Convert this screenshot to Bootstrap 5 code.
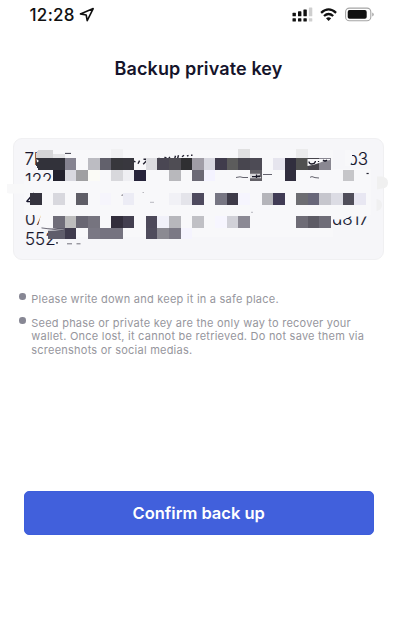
<!DOCTYPE html>
<html lang="en">
<head>
<meta charset="utf-8">
<meta name="viewport" content="width=device-width, initial-scale=1">
<title>Backup private key</title>
<link href="https://cdn.jsdelivr.net/npm/bootstrap@5.3.0/dist/css/bootstrap.min.css" rel="stylesheet">
<style>
body{font-family:Inter,"Liberation Sans",sans-serif;background:#fff;color:#15142b;height:643px;overflow:hidden}
.status{height:30px;padding:0 26px 0 29.5px;color:#111}
.clock{font-size:17px;font-weight:500;line-height:30px;letter-spacing:.3px}
.loc-arrow{margin-left:3px}
.screen-title{font-size:18px;font-weight:600;line-height:24px;margin:26.5px 0 0 -3px;letter-spacing:.12px}
.key-card{margin:57.5px 16px 0 13px;height:122px;border-radius:9px;background:#f6f6f9;border:1px solid #f0f0f2}
.key-card svg{left:-14px;top:-9px}
.notes{margin:32.5px 20px 0 19px;font-size:11px;line-height:13.6px;color:#96969d;letter-spacing:.23px}
.notes li{padding-left:12.3px;position:relative}
.notes li+li{margin-top:10.6px}
.notes li::before{content:"";position:absolute;left:0;top:.5px;width:6.5px;height:6.5px;border-radius:50%;background:#878794}
.confirm{--bs-btn-bg:#4160dc;--bs-btn-border-color:#3d5edb;--bs-btn-hover-bg:#3856cd;--bs-btn-color:#fff;margin:133.8px 26px 0 23.5px;height:43.5px;border-radius:5px;font-size:16.5px;font-weight:600;line-height:1}
</style>
<script src="https://cdn.jsdelivr.net/npm/bootstrap@5.3.0/dist/js/bootstrap.bundle.min.js"></script>
</head>
<body>
<header class="status d-flex align-items-center justify-content-between">
  <div class="d-flex align-items-center">
    <span class="clock">12:28</span>
    <svg class="loc-arrow" width="17" height="16" viewBox="0 0 17 16"><path d="M15.2 1.6 2.4 6.9 8.2 8 9.2 13.6Z" fill="none" stroke="#111" stroke-width="1.6" stroke-linejoin="round"/></svg>
  </div>
  <svg width="84" height="16" viewBox="290 6.5 84 16">
    <g fill="#111"><rect x="292.5" y="12.3" width="3.4" height="3.5" rx=".6"/><rect x="298" y="10.8" width="3.4" height="5" rx=".6"/><rect x="303.4" y="9" width="3.4" height="6.8" rx=".6"/><rect x="292.5" y="17.7" width="3.4" height="3.3" rx=".6"/><rect x="298" y="17.7" width="3.4" height="3.3" rx=".6"/><rect x="303.4" y="17.7" width="3.4" height="3.3" rx=".6"/></g>
    <g fill="#cfcfcf"><rect x="308.9" y="7" width="3.4" height="8.8" rx=".6"/><rect x="308.9" y="17.7" width="3.4" height="3.3" rx=".6"/></g>
    <g fill="none" stroke="#111" stroke-width="2.3"><path d="M321.1 12.3q7.5-6.8 15 0"/><path d="M324 15.5q4.6-4 9.2 0"/></g>
    <path d="M328.6 20.4 326 17.8q2.6-1.9 5.2 0Z" fill="#111"/>
    <rect x="345.6" y="7.6" width="25.2" height="12.7" rx="3.8" fill="none" stroke="#a5a5a5" stroke-width="1.1"/>
    <rect x="347.7" y="9.6" width="19" height="8.7" rx="1.8" fill="#111"/><path d="M372.2 12v4q1.6-.7 1.6-2t-1.6-2Z" fill="#aaa"/>
  </svg>
</header>
<main>
  <h1 class="screen-title text-center">Backup private key</h1>
  <section class="key-card position-relative">
    <svg class="position-absolute" width="400" height="140" viewBox="0 130 400 140">
      <g fill="#15142b" font-size="17" font-family="Inter,'Liberation Sans',sans-serif" font-weight="300" stroke="#15142b" stroke-width=".15">
        <text x="24.5" y="165.3">7b</text><text x="25" y="185.5">1225</text><text x="25" y="225">07</text><text x="25" y="244.5">552</text>
        <text x="347.5" y="165.3">b3</text><text x="332" y="225">d817</text>
      </g>
      <g fill="#f8f8fa">
        <path d="M24 181H371V195H35L28 200H24V193H7V184H24Z"/><path d="M42 194H370V215H24V205H42Z"/>
        <path d="M53 150H333V237H60L44 227H43V181H53ZM44 150H54V169H44Z"/><path d="M333 169H371V215H333Z"/>
        <path d="M345 150H352V160L350 166H345ZM328 210H370L368 216.5H350L344 219.5H328Z"/>
        <path d="M41 214.5H46V226H38Z"/>
      </g>
      <path d="M7 184h17v9.500H9q-2 0-2-2Z" fill="#f8f8f9"/>
      <path d="M377 176.500h5q6 1 6 6.200 0 5.500-6 5.800l-5 1Z" fill="#f0f0f0"/><path d="M376.500 199q5.500 1 5.500 6t-5.500 6Z" fill="#f0f0f1"/>
      <path d="M26.500 201.700 34 193M27 201.600h4" fill="none" stroke="#15142b" stroke-width="1.400"/>
      <g fill="none" stroke="#242331" stroke-width="1.400">
        <path d="M65 153.400h6" stroke-width=".9"/>
        <path d="M133 161l2.500.8M138 163.800l1.600-3.200M143.500 159.300h4.500l-4.800 5M157.500 159.300l2-1.200M164.500 157.200l2.500 1.400M169 156.800l1.500 2.500 2.500.4M174.500 159.300l1-3.500M178.500 155.300l-1 3.500M182 156.800l2-1.500M187 156.200l1.500-.8M191 155.300h1.500"/>
        <path d="M236 177.500l4-.7 3 .7h5M263 174.500h9M310 177.300l2-.7 3 1 4 .4M121.500 195.300l3-.7" stroke-width=".7"/>
        <path d="M142.500 192.500h1.500M150 202.300h4M251 212.300h2" stroke-width=".6" opacity=".5"/>
        <path d="M366.500 173.500h2.200" stroke-width="1.200"/>
        <path d="M67 243.800h5M76.500 243.800h4" stroke-width=".9" opacity=".7"/><path d="M57 242v1.700"/>
      </g>
      <!-- blocks that rise above the first mosaic row -->
      <g transform="translate(30.2 158.4) scale(11.57 11.54)" shape-rendering="crispEdges">
        <path fill="#d5d5d7" d="M.65-.7H2V0H.5V-.4Z"/><path fill="#e4e4e6" d="M2-.35H3V0H2z"/><path fill="#f1f1f3" d="M7-.8h1v.8H7z"/><path fill="#e0e0e1" d="M18-.85h1V0h-1z"/><path fill="#ebebec" d="M23-.85h1V0h-1z"/>
        <path fill="#32323a" d="M.5 0H3V1H.7L.5.6Z"/>
      </g>
      <g id="mosaic" transform="translate(30.2 158.4) scale(11.57 11.54)" shape-rendering="crispEdges"></g>
      <path d="M36.500 159l2.500 2-2 1.500Z" fill="#f8f8fa"/>
      <path d="M41.500 227.800q12 .4 23 2-10 .9-17 1Z" fill="#f4f4f8"/><path d="M41.500 227.900q10 1.500 21 2.300" fill="none" stroke="#4b4957" stroke-width=".8"/>
      <path d="M307.500 159h22.500v1q-6 .5-11 3-5 2.200-11.500 3Z" fill="#f8f8fa"/>
      <path d="M309 161.500q0 2.500 3 2.500t3.500-3M318.500 161v1M323 160q2 2 4 0" fill="none" stroke="#191826" stroke-width="1.300"/>
      <path d="M249.600 173.800h10.500v1l-4 1 5 1.400v1h-11.500Z" fill="#f8f8fa" opacity=".8"/><path d="M252 176.600h8M256.500 174.500v3.500" stroke="#191826" stroke-width="1.300"/>
    </svg>
  </section>
  <ul class="notes list-unstyled">
    <li>Please write down and keep it in a safe place.</li>
    <li>Seed phase or private key are the only way to recover your<br>wallet. Once lost, it cannot be retrieved. Do not save them via<br>screenshots or social medias.</li>
  </ul>
  <div class="d-grid"><button type="button" class="btn confirm">Confirm back up</button></div>
</main>
<script>
// Each entry is one mosaic row: column index -> colour.
const rows = [
  {3:'858390',5:'bcbcc2',6:'62616c',7:'37373c',8:'38373e',10:'dcdce0',11:'4a4753',12:'4f4d54',13:'2f2f32',14:'a09da6',15:'d8d8e0',16:'403c4c',17:'5c5c5c',18:'48464f',19:'4d4b55',21:'e6e5ee',22:'312e3e',23:'505050',24:'47454c',25:'8a8892'},
  {2:'23222f',3:'d9d9e0',4:'a0a0a2',5:'fbfbf6',7:'d8d8dc',8:'efeff3',9:'26233a',12:'b8b8bc',14:'6b6975',15:'f4f3ff',19:'626066',22:'312e3e',27:'c6c6c9'},
  {},
  {0:'35343f',2:'d8d8de',4:'5f5e67',6:'f6f5fc',8:'ececf5',12:'f1f1f6',13:'e4e4ea',14:'4e4a5e',16:'777683',17:'3e3b49',18:'f6f5fe',20:'b5b5ba',21:'413c55',23:'6d6d72',24:'686779',25:'c6c6cd',26:'dcdce4',27:'504e5a',28:'e8e7f2'},
  {},
  {2:'6f6d79',3:'bdbdbd',4:'696773',5:'76747f',7:'322e3c',8:'433f50',10:'4d495a',11:'f1f1f9',12:'b7b7bc',14:'c0c0c5',16:'f7f6ff',17:'d1d1d8',18:'8b8994',23:'6e6c76',24:'5d5b65',25:'6f6d78'},
  {1.5:'5f5d6b',2:'5f5d6b',3:'3f3b4d',5:'7a7884',6:'757380',7:'757380',10:'4f4c5c',11:'8b8a92',12:'7b7985',13:'f5f4fe'}
];
const layer = document.getElementById('mosaic');
rows.forEach((row, y) => {
  for (const [x, color] of Object.entries(row)) {
    const cell = document.createElementNS('http://www.w3.org/2000/svg', 'rect');
    cell.setAttribute('x', x);
    cell.setAttribute('y', y);
    cell.setAttribute('width', 1);
    cell.setAttribute('height', 1);
    cell.setAttribute('fill', '#' + color);
    layer.append(cell);
  }
});
</script>
</body>
</html>
